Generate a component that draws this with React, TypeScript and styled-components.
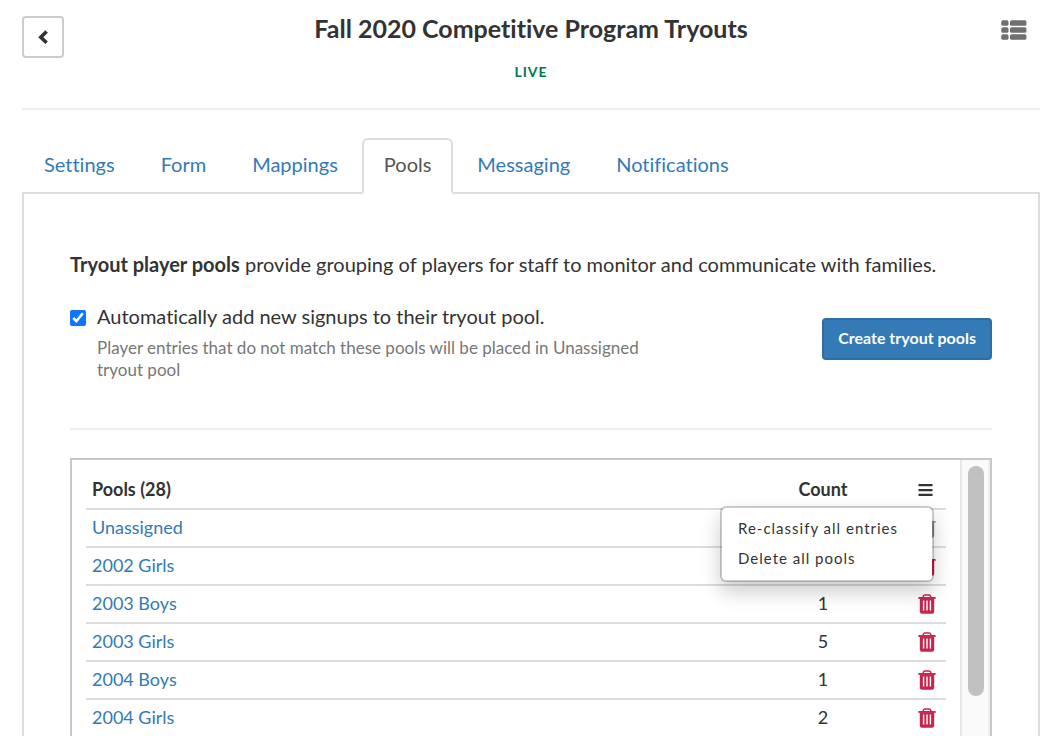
import React, { useState } from "react";
import styled, { createGlobalStyle } from "styled-components";

const GlobalStyle = createGlobalStyle`
  *, *::before, *::after { box-sizing: border-box; }
  body {
    margin: 0;
    background: #fff;
    color: #333;
    font-family: Lato, "Liberation Sans", sans-serif;
    font-size: 18px;
    line-height: 22px;
    font-variant-ligatures: none;
  }
  a { color: #337ab7; text-decoration: none; }
  button { font: inherit; font-variant-ligatures: none; color: inherit; cursor: pointer; }
`;

const Page = styled.div`
  display: flex;
  flex-direction: column;
  height: 100vh;
  overflow: hidden;
  padding: 0 14px 0 22px;
`;

const Header = styled.header`
  display: grid;
  grid-template-columns: 42px 1fr 42px;
  align-items: start;
  flex: none;
  height: 110px;
  border-bottom: 2px solid #eee;
`;

const BackButton = styled.button`
  display: flex;
  align-items: center;
  justify-content: center;
  width: 42px;
  height: 42px;
  margin-top: 16px;
  padding: 0;
  border: 2px solid #ccc;
  border-radius: 4px;
  background: #fff;
`;

const Heading = styled.div`
  padding-top: 12px;
  text-align: center;
`;

const Title = styled.h1`
  margin: 0;
  font-size: 25px;
  line-height: 32px;
  font-weight: 700;
`;

const Status = styled.p`
  margin: 17px 0 0;
  font-size: 14px;
  line-height: 22px;
  font-weight: 700;
  letter-spacing: 1px;
  color: #007a4d;
`;

const IconButton = styled.button`
  display: flex;
  padding: 0;
  border: 0;
  background: none;
`;

const ViewButton = styled(IconButton)`
  justify-self: end;
  margin: 20px 13px 0 0;
`;

const Tabs = styled.nav`
  display: flex;
  flex: none;
  gap: 2px;
  margin-top: 28px;
`;

const Tab = styled.a<{ $active?: boolean }>`
  position: relative;
  z-index: 1;
  height: 56px;
  margin-bottom: -2px;
  padding: 12px 20px;
  border: 2px solid ${(p) => (p.$active ? "#ddd" : "transparent")};
  border-bottom-color: ${(p) => (p.$active ? "#fff" : "transparent")};
  border-radius: 6px 6px 0 0;
  background: ${(p) => (p.$active ? "#fff" : "transparent")};
  color: ${(p) => (p.$active ? "#555" : "#337ab7")};
  font-size: 20px;
  line-height: 24px;
`;

const Panel = styled.main`
  display: flex;
  flex-direction: column;
  flex: 1;
  min-height: 0;
  padding: 58px 46px 0;
  border: 2px solid #ddd;
  border-bottom: 0;
`;

const Intro = styled.p`
  margin: 0;
  font-size: 20px;
  line-height: 24px;
`;

const Options = styled.section`
  display: grid;
  grid-template-columns: 2fr 1fr;
  align-items: start;
  margin-top: 28px;
  padding-bottom: 47px;
  border-bottom: 2px solid #eee;
`;

const Option = styled.div`
  display: grid;
  grid-template-columns: 16px 1fr;
  column-gap: 11px;
  padding-right: 24px;
`;

const Checkbox = styled.input`
  width: 16px;
  height: 16px;
  margin: 6px 0 0;
  accent-color: #0d75ff;
`;

const OptionLabel = styled.label`
  font-size: 20px;
  line-height: 24px;
`;

const Help = styled.p`
  grid-column: 2;
  margin: 9px 0 0;
  font-size: 17px;
  line-height: 22px;
  color: #777;
`;

const CreateButton = styled.button`
  justify-self: end;
  height: 42px;
  margin-top: 14px;
  padding: 0 14px 2px;
  border: 2px solid #2e6da4;
  border-radius: 4px;
  background: #337ab7;
  color: #fff;
  font-size: 16px;
  font-weight: 700;
`;

const ListBox = styled.section`
  display: flex;
  flex: 1;
  min-height: 0;
  margin-top: 28px;
  border: 2px solid #c8c8c8;
  border-bottom: 0;
`;

const ListBody = styled.div`
  flex: 1;
  padding: 12px 14px 0;
`;

const Table = styled.table`
  width: 100%;
  table-layout: fixed;
  border-collapse: separate;
  border-spacing: 0;
`;

const HeadCell = styled.th<{ $width?: number; $center?: boolean }>`
  position: relative;
  width: ${(p) => (p.$width ? `${p.$width}px` : "auto")};
  height: 36px;
  padding: 0 6px 2px;
  text-align: ${(p) => (p.$center ? "center" : "left")};
  font-weight: 700;
`;

const Cell = styled.td<{ $center?: boolean }>`
  height: 38px;
  padding: 0 6px 2px;
  border-top: 2px solid #ddd;
  text-align: ${(p) => (p.$center ? "center" : "left")};
`;

const RowButton = styled(IconButton)`
  margin: 2px 0 0 4px;
`;

const Menu = styled.ul`
  position: absolute;
  top: 34px;
  right: 12px;
  z-index: 2;
  width: 214px;
  margin: 0;
  padding: 5px 0 7px;
  list-style: none;
  background: #fff;
  background-clip: padding-box;
  border: 2px solid rgba(0, 0, 0, 0.2);
  border-radius: 6px;
  box-shadow: 0 10px 20px rgba(0, 0, 0, 0.2);
`;

const MenuItem = styled.button`
  display: block;
  width: 100%;
  padding: 4px 16px;
  border: 0;
  background: none;
  text-align: left;
  font-size: 15px;
  font-weight: 400;
  letter-spacing: 1px;
`;

const ScrollTrack = styled.div`
  width: 30px;
  padding: 6px 4px 0 6px;
  border-left: 2px solid #e8e8e8;
  border-right: 2px solid #eee;
  background: #fafafa;
`;

const ScrollThumb = styled.div`
  width: 16px;
  height: 230px;
  border-radius: 8px;
  background: #c1c1c1;
`;

const ChevronIcon = () => (
  <svg width="10" height="14" viewBox="0 0 10 14" aria-hidden="true">
    <path d="M8.6 1.4 2.8 7.2l5.8 5.6" fill="none" stroke="#333" strokeWidth="3.6" />
  </svg>
);

const ListIcon = () => (
  <svg width="26" height="20" viewBox="0 0 26 20" fill="#6f6f6f" aria-hidden="true">
    {[0, 7, 14].map((y) => (
      <g key={y}>
        <rect x="0.3" y={y + 0.2} width="7.2" height="5.6" rx="1.6" />
        <rect x="9" y={y + 0.2} width="16.4" height="5.6" rx="1.6" />
      </g>
    ))}
  </svg>
);

const MenuIcon = () => (
  <svg width="15" height="12" viewBox="0 0 15 12" fill="#333" aria-hidden="true">
    <path d="M.5 0h14v2.3H.5zM.5 4.9h14v2.3H.5zM.5 9.7h14V12H.5z" />
  </svg>
);

const TrashIcon = ({ color }: { color: string }) => (
  <svg width="18" height="20" viewBox="0 0 18 20" fill={color} aria-hidden="true">
    <path d="M5.2 3.6V2.7Q5.6 1 7 1h4q1.4 0 1.8 1.7v.9" fill="none" stroke={color} strokeWidth="1.5" />
    <path d="M.4 3h17.2v1.9H.4z" />
    <path
      fillRule="evenodd"
      d="M1.8 4.5h14.4v13q0 2.3-2.1 2.3H3.9q-2.1 0-2.1-2.3zM4.9 6.6v10h1.4v-10zM8.3 6.6v10h1.4v-10zM11.7 6.6v10h1.4v-10z"
    />
  </svg>
);

const tabs = ["Settings", "Form", "Mappings", "Pools", "Messaging", "Notifications"];

const pools = [
  { name: "Unassigned", count: "", locked: true },
  { name: "2002 Girls", count: "" },
  { name: "2003 Boys", count: "1" },
  { name: "2003 Girls", count: "5" },
  { name: "2004 Boys", count: "1" },
  { name: "2004 Girls", count: "2" },
];

export default function App() {
  const [autoAdd, setAutoAdd] = useState(true);
  const [menuOpen, setMenuOpen] = useState(true);

  return (
    <>
      <GlobalStyle />
      <Page>
        <Header>
          <BackButton aria-label="Back">
            <ChevronIcon />
          </BackButton>
          <Heading>
            <Title>Fall 2020 Competitive Program Tryouts</Title>
            <Status>LIVE</Status>
          </Heading>
          <ViewButton aria-label="List view">
            <ListIcon />
          </ViewButton>
        </Header>

        <Tabs>
          {tabs.map((name) => (
            <Tab key={name} href="#" $active={name === "Pools"} aria-current={name === "Pools" ? "page" : undefined}>
              {name}
            </Tab>
          ))}
        </Tabs>

        <Panel>
          <Intro>
            <strong>Tryout player pools</strong> provide grouping of players for staff to monitor and communicate with
            families.
          </Intro>

          <Options>
            <Option>
              <Checkbox
                id="auto-add"
                type="checkbox"
                checked={autoAdd}
                onChange={(e) => setAutoAdd(e.target.checked)}
              />
              <OptionLabel htmlFor="auto-add">Automatically add new signups to their tryout pool.</OptionLabel>
              <Help>Player entries that do not match these pools will be placed in Unassigned tryout pool</Help>
            </Option>
            <CreateButton>Create tryout pools</CreateButton>
          </Options>

          <ListBox>
            <ListBody>
              <Table>
                <thead>
                  <tr>
                    <HeadCell>Pools (28)</HeadCell>
                    <HeadCell $width={170} $center>
                      Count
                    </HeadCell>
                    <HeadCell $width={38}>
                      <RowButton aria-label="Pool actions" aria-expanded={menuOpen} onClick={() => setMenuOpen(!menuOpen)}>
                        <MenuIcon />
                      </RowButton>
                      {menuOpen && (
                        <Menu>
                          <li>
                            <MenuItem>Re-classify all entries</MenuItem>
                          </li>
                          <li>
                            <MenuItem>Delete all pools</MenuItem>
                          </li>
                        </Menu>
                      )}
                    </HeadCell>
                  </tr>
                </thead>
                <tbody>
                  {pools.map((pool) => (
                    <tr key={pool.name}>
                      <Cell>
                        <a href="#">{pool.name}</a>
                      </Cell>
                      <Cell $center>{pool.count}</Cell>
                      <Cell>
                        <RowButton aria-label={`Delete ${pool.name}`} disabled={pool.locked}>
                          <TrashIcon color={pool.locked ? "#999" : "#c7254e"} />
                        </RowButton>
                      </Cell>
                    </tr>
                  ))}
                </tbody>
              </Table>
            </ListBody>
            <ScrollTrack>
              <ScrollThumb />
            </ScrollTrack>
          </ListBox>
        </Panel>
      </Page>
    </>
  );
}
